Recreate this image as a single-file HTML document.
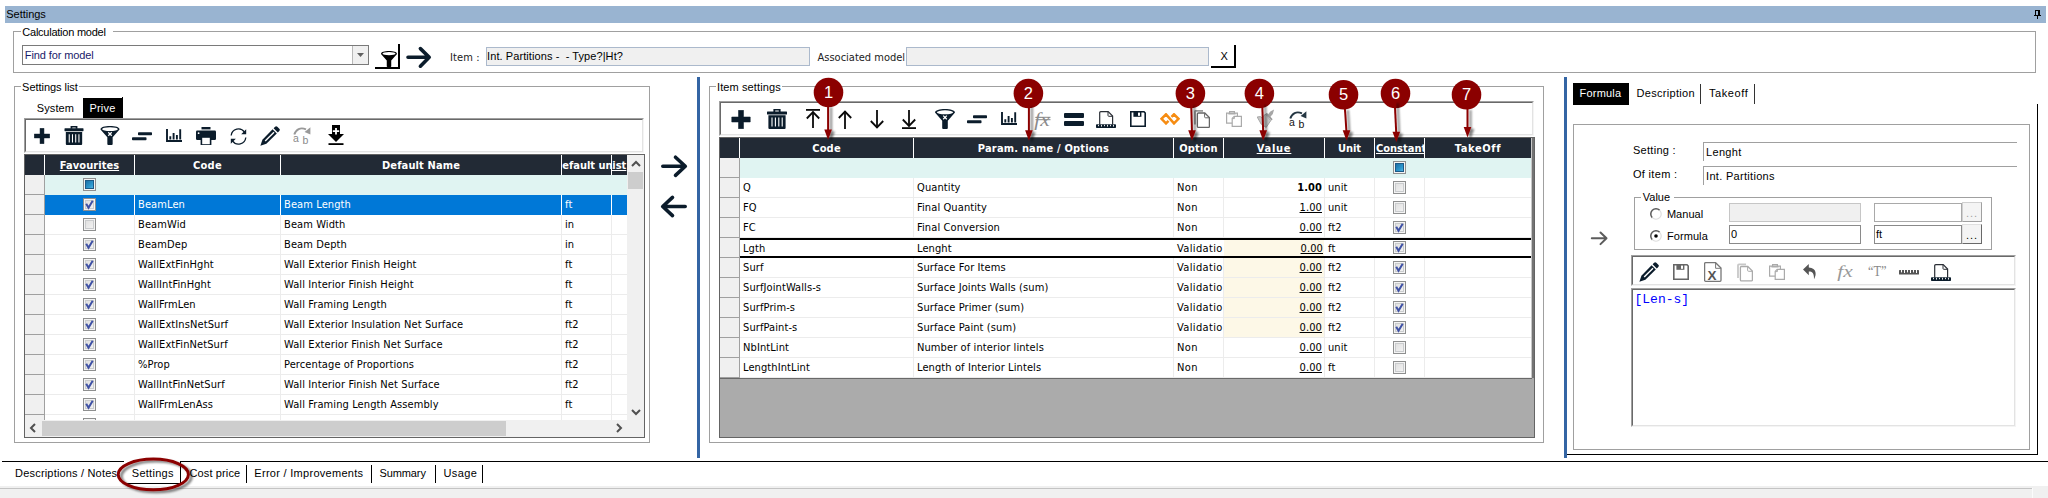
<!DOCTYPE html><html><head><meta charset="utf-8"><title>Settings</title><style>
html,body{margin:0;padding:0;background:#fff;}
body{width:2048px;height:498px;position:relative;overflow:hidden;font-family:"Liberation Sans",sans-serif;font-size:11px;color:#000;}
div,span,svg{position:absolute;box-sizing:border-box;}
span{white-space:pre;line-height:14px;}
.t{font-family:"Liberation Sans",sans-serif;font-size:11px;}
.g{font-family:"DejaVu Sans Condensed","Liberation Sans",sans-serif;font-size:11px;letter-spacing:0.1px;}
.h{font-family:"DejaVu Sans Condensed","Liberation Sans",sans-serif;font-size:11px;font-weight:bold;color:#fff;text-align:center;}
.u{text-decoration:underline;}
.cb{width:13px;height:13px;border:1px solid #8e8f8f;background:linear-gradient(135deg,#dcdcdc 0%,#f6f6f6 100%);box-shadow:inset 0 0 0 1px #f4f4f4, inset 0 0 0 2px #c9cbcd;}
</style></head><body>
<div style="left:5px;top:6px;width:2041px;height:17px;background:#99b4d1"></div>
<span class="t" style="left:6.3px;top:7px;letter-spacing:-0.03px;">Settings</span>
<svg style="left:2034px;top:10px;" width="8" height="10" viewBox="0 0 8 10"><path d="M1 0h5v5h1v1H4v3H3V6H0V5h1zM2 1v4h2V1z" fill="#000"/></svg>
<div style="left:0px;top:486px;width:2048px;height:12px;background:#f0f0f0"></div>
<div style="left:0px;top:488px;width:2032px;height:1px;background:#c4c4c4"></div>
<div style="left:2032px;top:488px;width:1px;height:10px;background:#fbfbfb"></div>
<div style="left:13px;top:31px;width:2023px;height:42px;border:1px solid #a0a0a0"></div>
<div style="left:20.8px;top:31px;width:92.4px;height:1px;background:#fff"></div>
<span class="t" style="left:22.3px;top:25px;letter-spacing:-0.24px;">Calculation model</span>
<div style="left:22px;top:45px;width:347px;height:20px;border:1px solid #7a7a7a;background:#fff"></div>
<span class="t" style="left:24.8px;top:48px;letter-spacing:-0.11px;color:#1a1a6a">Find for model</span>
<div style="left:352px;top:46px;width:16px;height:18px;border-left:1px solid #b8b8b8;background:#f0f0f0"></div>
<svg style="left:357px;top:53px;" width="7" height="4" viewBox="0 0 7 4"><path d="M0 0h7L3.5 4z" fill="#606060"/></svg>
<div style="left:398px;top:44px;width:2px;height:25px;background:#000"></div>
<div style="left:375px;top:67px;width:25px;height:2px;background:#000"></div>
<svg style="left:381px;top:51px;" width="16" height="16" viewBox="0 0 20 20"><path d="M0 3.6C0 1.2 4.5 0 10 0s10 1.2 10 3.6L12.8 11.8V19q0 1-1 1H8.2q-1 0-1-1V11.8z" fill="#000"/><ellipse cx="10" cy="3.3" rx="8.2" ry="2" fill="#fff"/></svg>
<svg style="left:405px;top:46px;" width="28" height="23" viewBox="0 0 28 23"><path d="M3 11.3h21M15.4 2.600L24.200 11.300l-8.800 8.900" fill="none" stroke="#0b1c2b" stroke-width="3.600" stroke-linecap="round" stroke-linejoin="round"/></svg>
<span class="g" style="left:449.9px;top:51px;letter-spacing:0.15px;color:#222">Item :</span>
<div style="left:486px;top:47px;width:324px;height:19px;border:1px solid #abb9cc;background:#f0f0f0"></div>
<span class="t" style="left:487.1px;top:49px;letter-spacing:0.08px;">Int. Partitions -  - Type?|Ht?</span>
<span class="g" style="left:817.5px;top:51px;letter-spacing:-0.00px;color:#222">Associated model</span>
<div style="left:906px;top:47px;width:303px;height:19px;border:1px solid #abb9cc;background:#f0f0f0"></div>
<div style="left:1234px;top:45px;width:2px;height:23px;background:#000"></div>
<div style="left:1211px;top:66px;width:25px;height:2px;background:#000"></div>
<span class="t" style="left:1220.5px;top:49px;letter-spacing:0.46px;">X</span>
<div style="left:14px;top:86px;width:636px;height:357px;border:1px solid #a0a0a0"></div>
<div style="left:20.6px;top:86px;width:58.699999999999996px;height:1px;background:#fff"></div>
<span class="t" style="left:22.1px;top:80px;letter-spacing:-0.04px;">Settings list</span>
<span class="t" style="left:36.7px;top:101px;letter-spacing:0.12px;">System</span>
<div style="left:83px;top:98px;width:40px;height:20px;background:#000"></div>
<div style="left:122px;top:97px;width:1px;height:1px;background:#000"></div>
<span class="t" style="left:89.4px;top:101px;letter-spacing:0.21px;color:#fff">Prive</span>
<div style="left:24px;top:118px;width:620px;height:35px;background:#fff;border-top:1px solid #a0a0a0;border-left:1px solid #a0a0a0;border-right:1px solid #f4f4f4;border-bottom:1px solid #f4f4f4"></div>
<div style="left:25px;top:119px;width:618px;height:33px;border-top:1px solid #696969;border-left:1px solid #696969;border-right:1px solid #e3e3e3;border-bottom:1px solid #e3e3e3"></div>
<div style="left:24px;top:154px;width:621px;height:284px;background:#fff;border:1px solid #646464"></div>
<svg style="left:34px;top:128px;" width="16" height="16" viewBox="0 0 20 20"><path d="M7.55 0.3h4.9v7.25h7.25v4.9h-7.25v7.25h-4.9v-7.25h-7.25v-4.9h7.25z" fill="#0b1c2b" stroke="#0b1c2b" stroke-width="0.6" stroke-linejoin="round"/></svg>
<svg style="left:64px;top:126px;" width="20" height="19" viewBox="0 0 20 20"><rect x="0" y="2.4" width="20" height="3" rx="0.5" fill="#0b1c2b"/><path d="M6.4 0h7.2v3h-1.8V1.5H8.2V3H6.4z" fill="#0b1c2b"/><path d="M1.4 6.2h17.2v12.8q0 1-1 1H2.4q-1 0-1-1z" fill="#0b1c2b"/><path d="M5 8.6v8.8M8.4 8.6v8.8M11.8 8.6v8.8M15.2 8.6v8.8" stroke="#fff" stroke-width="1.1"/></svg>
<svg style="left:100px;top:126px;" width="20" height="19" viewBox="0 0 20 20"><path d="M0 3.6C0 1.2 4.5 0 10 0s10 1.2 10 3.6L12.8 11.8V19q0 1-1 1H8.2q-1 0-1-1V11.8z" fill="#0b1c2b"/><ellipse cx="10" cy="3.3" rx="8.2" ry="2" fill="#fff"/><path d="M8.2 6.6l3.6 3.6M11.8 6.6l-3.6 3.6" stroke="#fff" stroke-width="1.3"/></svg>
<svg style="left:132px;top:132px;" width="20" height="9" viewBox="0 0 20 9"><rect x="6" y="0.2" width="14" height="3.1" rx="0.8" fill="#0b1c2b"/><rect x="0" y="5.2" width="14.5" height="3.1" rx="0.8" fill="#0b1c2b"/></svg>
<svg style="left:166px;top:129px;" width="16" height="13" viewBox="0 0 16 13"><path d="M1 0v12h15" fill="none" stroke="#0b1c2b" stroke-width="1.900"/><path d="M4.300 7.300v3.200M7.600 4v6.500M10.900 6v4.500M14.200 0.300v10.200" stroke="#0b1c2b" stroke-width="1.900"/></svg>
<svg style="left:196px;top:127px;" width="20" height="18" viewBox="0 0 20 18"><rect x="5.5" y="0" width="9" height="2.4" fill="#0b1c2b"/><rect x="0" y="3.6" width="20" height="9.4" rx="1.2" fill="#0b1c2b"/><rect x="5.4" y="10" width="9.2" height="8" fill="#fff" stroke="#0b1c2b" stroke-width="1.6"/><circle cx="2.6" cy="6.2" r="0.9" fill="#fff"/></svg>
<svg style="left:230px;top:128px;" width="17" height="17" viewBox="0 0 17 17"><path d="M1.2 7.5A7.3 7.3 0 0 1 14.5 4.2" fill="none" stroke="#0b1c2b" stroke-width="1.3"/><path d="M16.2 1.2v5h-5z" fill="#0b1c2b"/><path d="M15.8 9.5A7.3 7.3 0 0 1 2.5 12.8" fill="none" stroke="#0b1c2b" stroke-width="1.3"/><path d="M0.8 15.8v-5h5z" fill="#0b1c2b"/></svg>
<svg style="left:260px;top:126px;" width="20" height="20" viewBox="0 0 20 20"><path d="M12.6 3.2l4.2 4.2L6.4 17.8l-6 2 2-6z" fill="#0b1c2b"/><path d="M13.6 2.2l1.5-1.5q1.1-1.1 2.2 0l2 2q1.1 1.1 0 2.200l-1.5 1.5z" fill="#0b1c2b"/><path d="M5.2 15l8.8-8.800" stroke="#fff" stroke-width="1.4"/></svg>
<svg style="left:293px;top:126px;" width="18" height="18" viewBox="0 0 18 18"><path d="M1.300 8.600C2.800 3.400 7.500 0.800 13 3.400" fill="none" stroke="#999" stroke-width="1.900"/><path d="M17.400 1.300v7.300l-5.800-2.600z" fill="#999"/><text x="0.100" y="15.600" font-family="Liberation Sans,sans-serif" font-size="10.500" fill="#8a8a8a">a</text><text x="9.600" y="17.900" font-family="Liberation Sans,sans-serif" font-size="10.500" fill="#8a8a8a">b</text></svg>
<svg style="left:328px;top:125px;" width="16" height="20" viewBox="0 0 16 20"><path d="M4 0h8v9h4l-8 8-8-8h4z" fill="#000"/><path d="M7.1 3h1.8v2.3h2.3v1.8H8.9v2.3H7.1V7.1H4.8V5.3h2.3z" fill="#fff"/><rect x="0.5" y="18.2" width="15" height="1.8" fill="#000"/></svg>
<div style="left:25px;top:155px;width:602px;height:20px;background:#222a35"></div>
<div style="left:44px;top:155px;width:1px;height:20px;background:#fff"></div>
<div style="left:134px;top:155px;width:1px;height:20px;background:#fff"></div>
<div style="left:280px;top:155px;width:1px;height:20px;background:#fff"></div>
<div style="left:561px;top:155px;width:1px;height:20px;background:#fff"></div>
<div style="left:611px;top:155px;width:1px;height:20px;background:#fff"></div>
<span class="h u" style="left:45px;top:159px;width:89px;letter-spacing:0.06px;">Favourites</span>
<span class="h" style="left:135px;top:159px;width:145px;letter-spacing:0.28px;">Code</span>
<span class="h" style="left:281px;top:159px;width:280px;letter-spacing:0.12px;">Default Name</span>
<div style="left:562px;top:155px;width:49px;height:20px;overflow:hidden"><span class="h" style="left:-8px;top:4px;text-align:left">Default unit</span></div>
<div style="left:612px;top:155px;width:15px;height:20px;overflow:hidden"><span class="h u" style="left:-6px;top:4px;text-align:left">List</span></div>
<div style="left:45px;top:175px;width:582px;height:20px;background:#e0f4f2"></div>
<div style="left:25px;top:175px;width:19px;height:245px;background:#f0f0f0"></div>
<div style="left:44px;top:175px;width:1px;height:245px;background:#a0a0a0"></div>
<div class="cb" style="left:83px;top:178px;width:13px;height:13px;"><div style="left:1px;top:1px;width:9px;height:9px;border:1px solid #1d5a86;background:linear-gradient(135deg,#1b6fa6,#2f9bd0 70%,#55b5e0)"></div></div>
<div style="left:25px;top:194px;width:19px;height:1px;background:#a0a0a0"></div>
<div style="left:25px;top:195px;width:602px;height:225px;overflow:hidden">
<div style="left:20px;top:0px;width:583px;height:20px;background:#0078d7"></div>
<div style="left:0px;top:19px;width:19px;height:1px;background:#a0a0a0"></div>
<div class="cb" style="left:58px;top:3px;width:13px;height:13px;"><svg style="left:0px;top:0px" width="11" height="11" viewBox="0 0 11 11"><path d="M2.200 4.800l2.300 4L8.700 1.700" fill="none" stroke="#3f51a5" stroke-width="2"/></svg></div>
<span class="g" style="left:113px;top:3px;color:#fff">BeamLen</span>
<span class="g" style="left:259px;top:3px;color:#fff">Beam Length</span>
<span class="g" style="left:540px;top:3px;color:#fff">ft</span>
<div style="left:0px;top:39px;width:19px;height:1px;background:#a0a0a0"></div>
<div style="left:20px;top:39px;width:583px;height:1px;background:#ececec"></div>
<div class="cb" style="left:58px;top:23px;width:13px;height:13px;"></div>
<span class="g" style="left:113px;top:23px;">BeamWid</span>
<span class="g" style="left:259px;top:23px;">Beam Width</span>
<span class="g" style="left:540px;top:23px;">in</span>
<div style="left:0px;top:59px;width:19px;height:1px;background:#a0a0a0"></div>
<div style="left:20px;top:59px;width:583px;height:1px;background:#ececec"></div>
<div class="cb" style="left:58px;top:43px;width:13px;height:13px;"><svg style="left:0px;top:0px" width="11" height="11" viewBox="0 0 11 11"><path d="M2.200 4.800l2.300 4L8.700 1.700" fill="none" stroke="#3f51a5" stroke-width="2"/></svg></div>
<span class="g" style="left:113px;top:43px;">BeamDep</span>
<span class="g" style="left:259px;top:43px;">Beam Depth</span>
<span class="g" style="left:540px;top:43px;">in</span>
<div style="left:0px;top:79px;width:19px;height:1px;background:#a0a0a0"></div>
<div style="left:20px;top:79px;width:583px;height:1px;background:#ececec"></div>
<div class="cb" style="left:58px;top:63px;width:13px;height:13px;"><svg style="left:0px;top:0px" width="11" height="11" viewBox="0 0 11 11"><path d="M2.200 4.800l2.300 4L8.700 1.700" fill="none" stroke="#3f51a5" stroke-width="2"/></svg></div>
<span class="g" style="left:113px;top:63px;">WallExtFinHght</span>
<span class="g" style="left:259px;top:63px;">Wall Exterior Finish Height</span>
<span class="g" style="left:540px;top:63px;">ft</span>
<div style="left:0px;top:99px;width:19px;height:1px;background:#a0a0a0"></div>
<div style="left:20px;top:99px;width:583px;height:1px;background:#ececec"></div>
<div class="cb" style="left:58px;top:83px;width:13px;height:13px;"><svg style="left:0px;top:0px" width="11" height="11" viewBox="0 0 11 11"><path d="M2.200 4.800l2.300 4L8.700 1.700" fill="none" stroke="#3f51a5" stroke-width="2"/></svg></div>
<span class="g" style="left:113px;top:83px;">WallIntFinHght</span>
<span class="g" style="left:259px;top:83px;">Wall Interior Finish Height</span>
<span class="g" style="left:540px;top:83px;">ft</span>
<div style="left:0px;top:119px;width:19px;height:1px;background:#a0a0a0"></div>
<div style="left:20px;top:119px;width:583px;height:1px;background:#ececec"></div>
<div class="cb" style="left:58px;top:103px;width:13px;height:13px;"><svg style="left:0px;top:0px" width="11" height="11" viewBox="0 0 11 11"><path d="M2.200 4.800l2.300 4L8.700 1.700" fill="none" stroke="#3f51a5" stroke-width="2"/></svg></div>
<span class="g" style="left:113px;top:103px;">WallFrmLen</span>
<span class="g" style="left:259px;top:103px;">Wall Framing Length</span>
<span class="g" style="left:540px;top:103px;">ft</span>
<div style="left:0px;top:139px;width:19px;height:1px;background:#a0a0a0"></div>
<div style="left:20px;top:139px;width:583px;height:1px;background:#ececec"></div>
<div class="cb" style="left:58px;top:123px;width:13px;height:13px;"><svg style="left:0px;top:0px" width="11" height="11" viewBox="0 0 11 11"><path d="M2.200 4.800l2.300 4L8.700 1.700" fill="none" stroke="#3f51a5" stroke-width="2"/></svg></div>
<span class="g" style="left:113px;top:123px;">WallExtInsNetSurf</span>
<span class="g" style="left:259px;top:123px;">Wall Exterior Insulation Net Surface</span>
<span class="g" style="left:540px;top:123px;">ft2</span>
<div style="left:0px;top:159px;width:19px;height:1px;background:#a0a0a0"></div>
<div style="left:20px;top:159px;width:583px;height:1px;background:#ececec"></div>
<div class="cb" style="left:58px;top:143px;width:13px;height:13px;"><svg style="left:0px;top:0px" width="11" height="11" viewBox="0 0 11 11"><path d="M2.200 4.800l2.300 4L8.700 1.700" fill="none" stroke="#3f51a5" stroke-width="2"/></svg></div>
<span class="g" style="left:113px;top:143px;">WallExtFinNetSurf</span>
<span class="g" style="left:259px;top:143px;">Wall Exterior Finish Net Surface</span>
<span class="g" style="left:540px;top:143px;">ft2</span>
<div style="left:0px;top:179px;width:19px;height:1px;background:#a0a0a0"></div>
<div style="left:20px;top:179px;width:583px;height:1px;background:#ececec"></div>
<div class="cb" style="left:58px;top:163px;width:13px;height:13px;"><svg style="left:0px;top:0px" width="11" height="11" viewBox="0 0 11 11"><path d="M2.200 4.800l2.300 4L8.700 1.700" fill="none" stroke="#3f51a5" stroke-width="2"/></svg></div>
<span class="g" style="left:113px;top:163px;">%Prop</span>
<span class="g" style="left:259px;top:163px;">Percentage of Proportions</span>
<span class="g" style="left:540px;top:163px;">ft2</span>
<div style="left:0px;top:199px;width:19px;height:1px;background:#a0a0a0"></div>
<div style="left:20px;top:199px;width:583px;height:1px;background:#ececec"></div>
<div class="cb" style="left:58px;top:183px;width:13px;height:13px;"><svg style="left:0px;top:0px" width="11" height="11" viewBox="0 0 11 11"><path d="M2.200 4.800l2.300 4L8.700 1.700" fill="none" stroke="#3f51a5" stroke-width="2"/></svg></div>
<span class="g" style="left:113px;top:183px;">WallIntFinNetSurf</span>
<span class="g" style="left:259px;top:183px;">Wall Interior Finish Net Surface</span>
<span class="g" style="left:540px;top:183px;">ft2</span>
<div style="left:0px;top:219px;width:19px;height:1px;background:#a0a0a0"></div>
<div style="left:20px;top:219px;width:583px;height:1px;background:#ececec"></div>
<div class="cb" style="left:58px;top:203px;width:13px;height:13px;"><svg style="left:0px;top:0px" width="11" height="11" viewBox="0 0 11 11"><path d="M2.200 4.800l2.300 4L8.700 1.700" fill="none" stroke="#3f51a5" stroke-width="2"/></svg></div>
<span class="g" style="left:113px;top:203px;">WallFrmLenAss</span>
<span class="g" style="left:259px;top:203px;">Wall Framing Length Assembly</span>
<span class="g" style="left:540px;top:203px;">ft</span>
<div style="left:0px;top:239px;width:19px;height:1px;background:#a0a0a0"></div>
<div style="left:20px;top:239px;width:583px;height:1px;background:#ececec"></div>
<div class="cb" style="left:58px;top:223px;width:13px;height:13px;"><svg style="left:0px;top:0px" width="11" height="11" viewBox="0 0 11 11"><path d="M2.200 4.800l2.300 4L8.700 1.700" fill="none" stroke="#3f51a5" stroke-width="2"/></svg></div>
<span class="g" style="left:113px;top:223px;">WallExtSidNetSurf</span>
<span class="g" style="left:259px;top:223px;">Wall Exterior Siding Net Surface</span>
<span class="g" style="left:540px;top:223px;">ft2</span>
<div style="left:109px;top:0px;width:1px;height:225px;background:#ececec"></div>
<div style="left:109px;top:0px;width:1px;height:20px;background:#fff"></div>
<div style="left:255px;top:0px;width:1px;height:225px;background:#ececec"></div>
<div style="left:255px;top:0px;width:1px;height:20px;background:#fff"></div>
<div style="left:536px;top:0px;width:1px;height:225px;background:#ececec"></div>
<div style="left:536px;top:0px;width:1px;height:20px;background:#fff"></div>
<div style="left:586px;top:0px;width:1px;height:225px;background:#ececec"></div>
<div style="left:586px;top:0px;width:1px;height:20px;background:#fff"></div>
</div>
<div style="left:627px;top:155px;width:17px;height:265px;background:#f0f0f0"></div>
<div style="left:628px;top:172px;width:15px;height:17px;background:#cdcdcd"></div>
<svg style="left:631px;top:160px;" width="10" height="7" viewBox="0 0 10 7"><path d="M1 6L5 2l4 4" fill="none" stroke="#505050" stroke-width="2"/></svg>
<svg style="left:631px;top:409px;" width="10" height="7" viewBox="0 0 10 7"><path d="M1 1L5 5l4-4" fill="none" stroke="#505050" stroke-width="2"/></svg>
<div style="left:25px;top:420px;width:619px;height:17px;background:#f0f0f0"></div>
<div style="left:42px;top:421px;width:464px;height:15px;background:#cdcdcd"></div>
<svg style="left:29px;top:423px;" width="7" height="10" viewBox="0 0 7 10"><path d="M6 1L2 5l4 4" fill="none" stroke="#505050" stroke-width="2"/></svg>
<svg style="left:616px;top:423px;" width="7" height="10" viewBox="0 0 7 10"><path d="M1 1L5 5l-4 4" fill="none" stroke="#505050" stroke-width="2"/></svg>
<svg style="left:660px;top:154px;" width="30" height="25" viewBox="0 0 30 25"><path d="M2.800 12.300h22M15.500 3.200L25.300 12.300l-9.800 9.100" fill="none" stroke="#0b1c2b" stroke-width="3.600" stroke-linecap="round" stroke-linejoin="round"/></svg>
<svg style="left:660px;top:194px;" width="30" height="25" viewBox="0 0 30 25"><path d="M25.200 12.500h-22M12.500 3.400L2.700 12.500l9.800 9.100" fill="none" stroke="#0b1c2b" stroke-width="3.600" stroke-linecap="round" stroke-linejoin="round"/></svg>
<div style="left:697px;top:77px;width:3px;height:381px;background:#3465a4"></div>
<div style="left:1564px;top:77px;width:3px;height:381px;background:#3465a4"></div>
<div style="left:709px;top:86px;width:835px;height:357px;border:1px solid #a0a0a0"></div>
<div style="left:715.5px;top:86px;width:66.79999999999995px;height:1px;background:#fff"></div>
<span class="t" style="left:717.0px;top:80px;letter-spacing:0.11px;">Item settings</span>
<div style="left:719px;top:101px;width:815px;height:35px;background:#fff;border-top:1px solid #a0a0a0;border-left:1px solid #a0a0a0;border-right:1px solid #f4f4f4;border-bottom:1px solid #f4f4f4"></div>
<div style="left:720px;top:102px;width:813px;height:33px;border-top:1px solid #696969;border-left:1px solid #696969;border-right:1px solid #e3e3e3;border-bottom:1px solid #e3e3e3"></div>
<div style="left:719px;top:137px;width:816px;height:301px;background:#ababab;border:1px solid #646464"></div>
<svg style="left:731px;top:110px;" width="20" height="19" viewBox="0 0 20 20"><path d="M7.4 0.3h5.2v7.1000000000000005h7.1000000000000005v5.2h-7.1000000000000005v7.1000000000000005h-5.2v-7.1000000000000005h-7.1000000000000005v-5.2h7.1000000000000005z" fill="#0b1c2b" stroke="#0b1c2b" stroke-width="0.6" stroke-linejoin="round"/></svg>
<svg style="left:767px;top:109px;" width="20" height="20" viewBox="0 0 20 20"><rect x="0" y="2.4" width="20" height="3" rx="0.5" fill="#0b1c2b"/><path d="M6.4 0h7.2v3h-1.8V1.5H8.2V3H6.4z" fill="#0b1c2b"/><path d="M1.4 6.2h17.2v12.8q0 1-1 1H2.4q-1 0-1-1z" fill="#0b1c2b"/><path d="M5 8.6v8.8M8.4 8.6v8.8M11.8 8.6v8.8M15.2 8.6v8.8" stroke="#fff" stroke-width="1.1"/></svg>
<svg style="left:806px;top:109px;" width="14" height="19" viewBox="0 0 14 19"><path d="M0 0.9h14" stroke="#0a0a0a" stroke-width="1.8"/><path d="M7 2.8V19" stroke="#0a0a0a" stroke-width="1.8" fill="none"/><path d="M0.8 9.5L7 3.1l6.2 6.4" stroke="#0a0a0a" stroke-width="1.8" fill="none"/></svg>
<svg style="left:838px;top:110px;" width="14" height="19" viewBox="0 0 14 19"><path d="M7 1.3V19" stroke="#0a0a0a" stroke-width="1.8" fill="none"/><path d="M0.8 8L7 1.6l6.2 6.4" stroke="#0a0a0a" stroke-width="1.8" fill="none"/></svg>
<svg style="left:870px;top:110px;" width="14" height="19" viewBox="0 0 14 19"><g transform="translate(0,19) scale(1,-1)"><path d="M7 1.3V19" stroke="#0a0a0a" stroke-width="1.8" fill="none"/><path d="M0.8 8L7 1.6l6.2 6.4" stroke="#0a0a0a" stroke-width="1.8" fill="none"/></g></svg>
<svg style="left:902px;top:110px;" width="14" height="19" viewBox="0 0 14 19"><g transform="translate(0,19) scale(1,-1)"><path d="M0 0.9h14" stroke="#0a0a0a" stroke-width="1.8"/><path d="M7 2.8V19" stroke="#0a0a0a" stroke-width="1.8" fill="none"/><path d="M0.8 9.5L7 3.1l6.2 6.4" stroke="#0a0a0a" stroke-width="1.8" fill="none"/></g></svg>
<svg style="left:935px;top:109px;" width="20" height="20" viewBox="0 0 20 20"><path d="M0 3.6C0 1.2 4.5 0 10 0s10 1.2 10 3.6L12.8 11.8V19q0 1-1 1H8.2q-1 0-1-1V11.8z" fill="#0b1c2b"/><ellipse cx="10" cy="3.3" rx="8.2" ry="2" fill="#fff"/><path d="M8.2 6.6l3.6 3.6M11.8 6.6l-3.6 3.6" stroke="#fff" stroke-width="1.3"/></svg>
<svg style="left:967px;top:115px;" width="20" height="9" viewBox="0 0 20 9"><rect x="6" y="0.2" width="14" height="3.1" rx="0.8" fill="#0b1c2b"/><rect x="0" y="5.2" width="14.5" height="3.1" rx="0.8" fill="#0b1c2b"/></svg>
<svg style="left:1001px;top:112px;" width="16" height="13" viewBox="0 0 16 13"><path d="M1 0v12h15" fill="none" stroke="#0b1c2b" stroke-width="1.900"/><path d="M4.300 7.300v3.200M7.600 4v6.500M10.900 6v4.500M14.200 0.300v10.200" stroke="#0b1c2b" stroke-width="1.900"/></svg>
<svg style="left:1034px;top:111px;overflow:visible" width="17" height="17" viewBox="0 0 17 17"><text x="0.300" y="14.6" font-family="Liberation Serif,serif" font-style="italic" font-size="18.5" fill="#8a8a8a" textLength="15.500" lengthAdjust="spacingAndGlyphs">fx</text><path d="M1.500 6.300h15M1.500 8.700h15" stroke="#8a8a8a" stroke-width="1"/></svg>
<svg style="left:1064px;top:113px;" width="20" height="13" viewBox="0 0 20 13"><rect x="0" y="0" width="20" height="5" rx="1" fill="#0b1c2b"/><rect x="0" y="8" width="20" height="5" rx="1" fill="#0b1c2b"/></svg>
<svg style="left:1096px;top:111px;" width="20" height="17" viewBox="0 0 20 17"><path d="M3.700 13.500V1.700q0-1 1-1h7.500l4.400 4.400v8.400" fill="none" stroke="#2b2f36" stroke-width="1.200"/><path d="M12 0.900v3.600q0 0.800 0.800 0.800h3.600" fill="none" stroke="#2b2f36" stroke-width="1"/><rect x="0" y="13.200" width="20" height="3.800" rx="0.800" fill="#0b1c2b"/><path d="M2.500 13.800v1.400M5.500 13.800v1.800M8.500 13.800v1.400M11.500 13.800v1.800M14.500 13.800v1.400M17.500 13.800v1.800" stroke="#fff" stroke-width="0.900"/></svg>
<svg style="left:1130px;top:111px;" width="16" height="16" viewBox="0 0 16 16"><path d="M0.8 0.8h13.2l1.2 1.2v13.2H0.8z" fill="#fff" stroke="#0b1c2b" stroke-width="1.6"/><rect x="3.4" y="0.8" width="8" height="5" fill="#0b1c2b"/><rect x="8" y="1.6" width="2" height="3.2" fill="#fff"/></svg>
<svg style="left:1160px;top:113px;" width="20" height="12" viewBox="0 0 20 12"><path d="M8.500 7.900L6 10.400 1.500 5.800 6 1.300l8 9.100 4.500-4.600L14 1.300l-2.500 2.500" fill="none" stroke="#f68c12" stroke-width="2.500"/></svg>
<svg style="left:1194px;top:110px;" width="16" height="18" viewBox="0 0 16 18"><path d="M1 14.500V1.800q0-1 1-1h7" fill="none" stroke="#666" stroke-width="1.800" opacity=".65"/><path d="M4.400 3h6.400l4.600 4.600v8.800q0 1-1 1H4.400q-1 0-1-1V4q0-1 1-1z" fill="#fff" stroke="#666" stroke-width="1.300"/><path d="M10.600 3.200v3.600q0 1 1 1h3.600" fill="none" stroke="#666" stroke-width="1"/></svg>
<svg style="left:1226px;top:111px;" width="16" height="16" viewBox="0 0 16 16"><path d="M0.6 2.2h10.8v10H0.6z" fill="#fff" stroke="#aaa" stroke-width="1.2"/><path d="M3.6 2.2V0.6h4.8v1.6" fill="none" stroke="#aaa" stroke-width="1.2"/><path d="M2.4 2.8h7.2" stroke="#aaa" stroke-width="1.4"/><path d="M6.2 7.4l2-2h7.2v10H6.2z" fill="#fff" stroke="#aaa" stroke-width="1.2"/><path d="M8.4 5.6v2h-2" fill="none" stroke="#aaa" stroke-width="1"/></svg>
<svg style="left:1257px;top:109px;" width="18" height="19" viewBox="0 0 18 19"><path d="M17.100 0.500L15.800 5.100 12.500 8.800 10 6.800 13.300 2.600z" fill="#a6a6a6"/><path d="M8.400 5.100L13.700 11.700 9.200 18.400 4.200 15.100 0.200 8 3.400 7.600 5 8.800z" fill="#c6c6c6" stroke="#a6a6a6" stroke-width="1"/><path d="M9.200 4.300L15 10.900" stroke="#9c9c9c" stroke-width="1.800"/></svg>
<svg style="left:1289px;top:110px;" width="18" height="18" viewBox="0 0 18 18"><path d="M1.300 8.600C2.800 3.400 7.500 0.800 13 3.400" fill="none" stroke="#243642" stroke-width="1.900"/><path d="M17.400 1.300v7.300l-5.800-2.600z" fill="#243642"/><text x="0.100" y="15.600" font-family="Liberation Sans,sans-serif" font-size="10.500" fill="#111">a</text><text x="9.600" y="17.900" font-family="Liberation Sans,sans-serif" font-size="10.500" fill="#111">b</text></svg>
<div style="left:720px;top:138px;width:811px;height:20px;background:#222a35"></div>
<div style="left:739px;top:138px;width:1px;height:20px;background:#fff"></div>
<div style="left:913px;top:138px;width:1px;height:20px;background:#fff"></div>
<div style="left:1173px;top:138px;width:1px;height:20px;background:#fff"></div>
<div style="left:1223px;top:138px;width:1px;height:20px;background:#fff"></div>
<div style="left:1324px;top:138px;width:1px;height:20px;background:#fff"></div>
<div style="left:1374px;top:138px;width:1px;height:20px;background:#fff"></div>
<div style="left:1424px;top:138px;width:1px;height:20px;background:#fff"></div>
<div style="left:1531px;top:138px;width:1px;height:240px;background:#c8c8c8"></div>
<div style="left:1532px;top:138px;width:2px;height:240px;background:#747474"></div>
<span class="h" style="left:740px;top:142px;width:173px;letter-spacing:0.18px;">Code</span>
<span class="h" style="left:914px;top:142px;width:259px;letter-spacing:0.19px;">Param. name / Options</span>
<span class="h" style="left:1174px;top:142px;width:49px;letter-spacing:0.21px;">Option</span>
<span class="h u" style="left:1224px;top:142px;width:100px;letter-spacing:0.76px;">Value</span>
<span class="h" style="left:1325px;top:142px;width:49px;letter-spacing:-0.03px;">Unit</span>
<div style="left:1375px;top:138px;width:49px;height:20px;overflow:hidden"><span class="h u" style="left:1px;top:4px;text-align:left">Constant</span></div>
<span class="h" style="left:1425px;top:142px;width:106px;letter-spacing:0.61px;">TakeOff</span>
<div style="left:740px;top:158px;width:791px;height:20px;background:#e0f4f2"></div>
<div style="left:720px;top:158px;width:19px;height:220px;background:#f0f0f0"></div>
<div style="left:739px;top:158px;width:1px;height:220px;background:#a0a0a0"></div>
<div style="left:720px;top:177px;width:19px;height:1px;background:#a0a0a0"></div>
<div class="cb" style="left:1393px;top:161px;width:13px;height:13px;"><div style="left:1px;top:1px;width:9px;height:9px;border:1px solid #1d5a86;background:linear-gradient(135deg,#1b6fa6,#2f9bd0 70%,#55b5e0)"></div></div>
<div style="left:740px;top:178px;width:791px;height:200px;background:#fff"></div>
<div style="left:720px;top:197px;width:19px;height:1px;background:#a0a0a0"></div>
<div style="left:740px;top:197px;width:791px;height:1px;background:#ececec"></div>
<span class="g" style="left:743px;top:181px;">Q</span>
<span class="g" style="left:917px;top:181px;">Quantity</span>
<span class="g" style="left:1177px;top:181px;letter-spacing:0.35px">Non</span>
<span class="g" style="left:1224px;top:181px;width:98px;text-align:right;font-weight:bold;">1.00</span>
<span class="g" style="left:1328px;top:181px;">unit</span>
<div class="cb" style="left:1393px;top:181px;width:13px;height:13px;"></div>
<div style="left:720px;top:217px;width:19px;height:1px;background:#a0a0a0"></div>
<div style="left:740px;top:217px;width:791px;height:1px;background:#ececec"></div>
<span class="g" style="left:743px;top:201px;">FQ</span>
<span class="g" style="left:917px;top:201px;">Final Quantity</span>
<span class="g" style="left:1177px;top:201px;letter-spacing:0.35px">Non</span>
<span class="g" style="left:1224px;top:201px;width:98px;text-align:right;text-decoration:underline;">1.00</span>
<span class="g" style="left:1328px;top:201px;">unit</span>
<div class="cb" style="left:1393px;top:201px;width:13px;height:13px;"></div>
<div style="left:720px;top:237px;width:19px;height:1px;background:#a0a0a0"></div>
<div style="left:740px;top:237px;width:791px;height:1px;background:#ececec"></div>
<span class="g" style="left:743px;top:221px;">FC</span>
<span class="g" style="left:917px;top:221px;">Final Conversion</span>
<span class="g" style="left:1177px;top:221px;letter-spacing:0.35px">Non</span>
<span class="g" style="left:1224px;top:221px;width:98px;text-align:right;text-decoration:underline;">0.00</span>
<span class="g" style="left:1328px;top:221px;">ft2</span>
<div class="cb" style="left:1393px;top:221px;width:13px;height:13px;"><svg style="left:0px;top:0px" width="11" height="11" viewBox="0 0 11 11"><path d="M2.200 4.800l2.300 4L8.700 1.700" fill="none" stroke="#3f51a5" stroke-width="2"/></svg></div>
<div style="left:720px;top:257px;width:19px;height:1px;background:#a0a0a0"></div>
<div style="left:740px;top:257px;width:791px;height:1px;background:#ececec"></div>
<div style="left:1224px;top:238px;width:100px;height:19px;background:#fdf8e7"></div>
<span class="g" style="left:743px;top:242px;">Lgth</span>
<span class="g" style="left:917px;top:242px;">Lenght</span>
<span class="g" style="left:1177px;top:242px;letter-spacing:0.35px">Validatio</span>
<span class="g" style="left:1224px;top:242px;width:99px;text-align:right;text-decoration:underline;">0.00</span>
<span class="g" style="left:1328px;top:242px;">ft</span>
<div class="cb" style="left:1393px;top:241px;width:13px;height:13px;"><svg style="left:0px;top:0px" width="11" height="11" viewBox="0 0 11 11"><path d="M2.200 4.800l2.300 4L8.700 1.700" fill="none" stroke="#3f51a5" stroke-width="2"/></svg></div>
<div style="left:720px;top:277px;width:19px;height:1px;background:#a0a0a0"></div>
<div style="left:740px;top:277px;width:791px;height:1px;background:#ececec"></div>
<div style="left:1224px;top:258px;width:100px;height:19px;background:#fdf8e7"></div>
<span class="g" style="left:743px;top:261px;">Surf</span>
<span class="g" style="left:917px;top:261px;">Surface For Items</span>
<span class="g" style="left:1177px;top:261px;letter-spacing:0.35px">Validatio</span>
<span class="g" style="left:1224px;top:261px;width:98px;text-align:right;text-decoration:underline;">0.00</span>
<span class="g" style="left:1328px;top:261px;">ft2</span>
<div class="cb" style="left:1393px;top:261px;width:13px;height:13px;"><svg style="left:0px;top:0px" width="11" height="11" viewBox="0 0 11 11"><path d="M2.200 4.800l2.300 4L8.700 1.700" fill="none" stroke="#3f51a5" stroke-width="2"/></svg></div>
<div style="left:720px;top:297px;width:19px;height:1px;background:#a0a0a0"></div>
<div style="left:740px;top:297px;width:791px;height:1px;background:#ececec"></div>
<div style="left:1224px;top:278px;width:100px;height:19px;background:#fdf8e7"></div>
<span class="g" style="left:743px;top:281px;">SurfJointWalls-s</span>
<span class="g" style="left:917px;top:281px;">Surface Joints Walls (sum)</span>
<span class="g" style="left:1177px;top:281px;letter-spacing:0.35px">Validatio</span>
<span class="g" style="left:1224px;top:281px;width:98px;text-align:right;text-decoration:underline;">0.00</span>
<span class="g" style="left:1328px;top:281px;">ft2</span>
<div class="cb" style="left:1393px;top:281px;width:13px;height:13px;"><svg style="left:0px;top:0px" width="11" height="11" viewBox="0 0 11 11"><path d="M2.200 4.800l2.300 4L8.700 1.700" fill="none" stroke="#3f51a5" stroke-width="2"/></svg></div>
<div style="left:720px;top:317px;width:19px;height:1px;background:#a0a0a0"></div>
<div style="left:740px;top:317px;width:791px;height:1px;background:#ececec"></div>
<div style="left:1224px;top:298px;width:100px;height:19px;background:#fdf8e7"></div>
<span class="g" style="left:743px;top:301px;">SurfPrim-s</span>
<span class="g" style="left:917px;top:301px;">Surface Primer (sum)</span>
<span class="g" style="left:1177px;top:301px;letter-spacing:0.35px">Validatio</span>
<span class="g" style="left:1224px;top:301px;width:98px;text-align:right;text-decoration:underline;">0.00</span>
<span class="g" style="left:1328px;top:301px;">ft2</span>
<div class="cb" style="left:1393px;top:301px;width:13px;height:13px;"><svg style="left:0px;top:0px" width="11" height="11" viewBox="0 0 11 11"><path d="M2.200 4.800l2.300 4L8.700 1.700" fill="none" stroke="#3f51a5" stroke-width="2"/></svg></div>
<div style="left:720px;top:337px;width:19px;height:1px;background:#a0a0a0"></div>
<div style="left:740px;top:337px;width:791px;height:1px;background:#ececec"></div>
<div style="left:1224px;top:318px;width:100px;height:19px;background:#fdf8e7"></div>
<span class="g" style="left:743px;top:321px;">SurfPaint-s</span>
<span class="g" style="left:917px;top:321px;">Surface Paint (sum)</span>
<span class="g" style="left:1177px;top:321px;letter-spacing:0.35px">Validatio</span>
<span class="g" style="left:1224px;top:321px;width:98px;text-align:right;text-decoration:underline;">0.00</span>
<span class="g" style="left:1328px;top:321px;">ft2</span>
<div class="cb" style="left:1393px;top:321px;width:13px;height:13px;"><svg style="left:0px;top:0px" width="11" height="11" viewBox="0 0 11 11"><path d="M2.200 4.800l2.300 4L8.700 1.700" fill="none" stroke="#3f51a5" stroke-width="2"/></svg></div>
<div style="left:720px;top:357px;width:19px;height:1px;background:#a0a0a0"></div>
<div style="left:740px;top:357px;width:791px;height:1px;background:#ececec"></div>
<span class="g" style="left:743px;top:341px;">NbIntLint</span>
<span class="g" style="left:917px;top:341px;">Number of interior lintels</span>
<span class="g" style="left:1177px;top:341px;letter-spacing:0.35px">Non</span>
<span class="g" style="left:1224px;top:341px;width:98px;text-align:right;text-decoration:underline;">0.00</span>
<span class="g" style="left:1328px;top:341px;">unit</span>
<div class="cb" style="left:1393px;top:341px;width:13px;height:13px;"></div>
<div style="left:720px;top:377px;width:19px;height:1px;background:#a0a0a0"></div>
<div style="left:740px;top:377px;width:791px;height:1px;background:#ececec"></div>
<span class="g" style="left:743px;top:361px;">LengthIntLint</span>
<span class="g" style="left:917px;top:361px;">Length of Interior Lintels</span>
<span class="g" style="left:1177px;top:361px;letter-spacing:0.35px">Non</span>
<span class="g" style="left:1224px;top:361px;width:98px;text-align:right;text-decoration:underline;">0.00</span>
<span class="g" style="left:1328px;top:361px;">ft</span>
<div class="cb" style="left:1393px;top:361px;width:13px;height:13px;"></div>
<div style="left:913px;top:178px;width:1px;height:200px;background:#ececec"></div>
<div style="left:913px;top:240px;width:1px;height:16px;background:#fff"></div>
<div style="left:1173px;top:178px;width:1px;height:200px;background:#ececec"></div>
<div style="left:1173px;top:240px;width:1px;height:16px;background:#fff"></div>
<div style="left:1223px;top:178px;width:1px;height:200px;background:#ececec"></div>
<div style="left:1223px;top:240px;width:1px;height:16px;background:#fff"></div>
<div style="left:1324px;top:178px;width:1px;height:200px;background:#ececec"></div>
<div style="left:1324px;top:240px;width:1px;height:16px;background:#fff"></div>
<div style="left:1374px;top:178px;width:1px;height:200px;background:#ececec"></div>
<div style="left:1374px;top:240px;width:1px;height:16px;background:#fff"></div>
<div style="left:1424px;top:178px;width:1px;height:200px;background:#ececec"></div>
<div style="left:1424px;top:240px;width:1px;height:16px;background:#fff"></div>
<div style="left:740px;top:238px;width:791px;height:2px;background:#000"></div>
<div style="left:740px;top:256px;width:791px;height:2px;background:#000"></div>
<div style="left:720px;top:378px;width:812px;height:1px;background:#696969"></div>
<div style="left:1573px;top:83px;width:56px;height:22px;background:#000"></div>
<span class="t" style="left:1579.5px;top:86px;letter-spacing:0.21px;color:#fff">Formula</span>
<span class="t" style="left:1636.5px;top:86px;letter-spacing:0.31px;">Description</span>
<div style="left:1700px;top:84px;width:1px;height:20px;background:#333"></div>
<span class="t" style="left:1708.9px;top:86px;letter-spacing:0.59px;">Takeoff</span>
<div style="left:1754px;top:84px;width:1px;height:20px;background:#333"></div>
<div style="left:2037px;top:104px;width:1px;height:351px;background:#000"></div>
<div style="left:1567px;top:454px;width:471px;height:1px;background:#000"></div>
<div style="left:1573px;top:124px;width:457px;height:326px;border:1px solid #a0a0a0"></div>
<span class="t" style="left:1632.9px;top:143px;letter-spacing:0.30px;">Setting :</span>
<div style="left:1703px;top:142px;width:314px;height:19px;border-top:1px solid #a0a0a0;border-left:1px solid #a0a0a0"></div>
<span class="t" style="left:1706.1px;top:145px;letter-spacing:0.29px;">Lenght</span>
<span class="t" style="left:1632.9px;top:167px;letter-spacing:0.34px;">Of item :</span>
<div style="left:1703px;top:166px;width:314px;height:19px;border-top:1px solid #a0a0a0;border-left:1px solid #a0a0a0"></div>
<span class="t" style="left:1706.1px;top:169px;letter-spacing:0.30px;">Int. Partitions</span>
<div style="left:1634px;top:197px;width:358px;height:53px;border:1px solid #a0a0a0"></div>
<div style="left:1641px;top:197px;width:33px;height:1px;background:#fff"></div>
<span class="t" style="left:1642.8px;top:190px;letter-spacing:-0.03px;">Value</span>
<svg style="left:1649.5px;top:208px;" width="12" height="12" viewBox="0 0 12 12"><circle cx="6" cy="6" r="5" fill="#fff"/><path d="M2.300 9.700A5.200 5.200 0 0 1 9.700 2.300" fill="none" stroke="#5a5a5a" stroke-width="1.500"/><path d="M2.300 9.700A5.200 5.200 0 0 0 9.700 2.300" fill="none" stroke="#dedede" stroke-width="1.200"/></svg>
<span class="t" style="left:1666.9px;top:207px;letter-spacing:0.04px;">Manual</span>
<div style="left:1729px;top:203px;width:132px;height:19px;border:1px solid #c6c6c6;background:#f0f0f0"></div>
<div style="left:1874px;top:203px;width:88px;height:19px;border:1px solid #a9a9a9;background:#fff"></div>
<div style="left:1962px;top:202px;width:20px;height:20px;border:1px solid #d0d0d0;background:#f4f4f4;border-right-color:#a0a0a0;border-bottom-color:#a0a0a0"></div>
<span class="t" style="left:1966px;top:206px;color:#a0a0a0;letter-spacing:1px">...</span>
<svg style="left:1649.5px;top:230.2px;" width="12" height="12" viewBox="0 0 12 12"><circle cx="6" cy="6" r="5" fill="#fff"/><path d="M2.300 9.700A5.200 5.200 0 0 1 9.700 2.300" fill="none" stroke="#5a5a5a" stroke-width="1.500"/><path d="M2.300 9.700A5.200 5.200 0 0 0 9.700 2.300" fill="none" stroke="#dedede" stroke-width="1.200"/><circle cx="6" cy="6" r="1.800" fill="#000"/></svg>
<span class="t" style="left:1666.9px;top:229px;letter-spacing:0.09px;">Formula</span>
<div style="left:1729px;top:225px;width:132px;height:19px;border:1px solid #8a8a8a;background:#fff"></div>
<span class="t" style="left:1731px;top:227px;">0</span>
<div style="left:1874px;top:225px;width:88px;height:19px;border:1px solid #8a8a8a;background:#fff"></div>
<span class="t" style="left:1876px;top:227px;">ft</span>
<div style="left:1962px;top:224px;width:20px;height:20px;border:1px solid #e0e0e0;background:#f4f4f4;border-right-color:#696969;border-bottom-color:#696969"></div>
<span class="t" style="left:1966px;top:228px;letter-spacing:1px">...</span>
<svg style="left:1590px;top:231px;" width="19" height="15" viewBox="0 0 19 15"><path d="M1.800 7.300h14.500M10.500 1.500l6 5.800-6 5.800" fill="none" stroke="#5c5c5c" stroke-width="2" stroke-linecap="round" stroke-linejoin="round"/></svg>
<div style="left:1631px;top:255px;width:385px;height:31px;background:#fff;border-top:1px solid #a0a0a0;border-left:1px solid #a0a0a0;border-right:1px solid #f4f4f4;border-bottom:1px solid #f4f4f4"></div>
<div style="left:1632px;top:256px;width:383px;height:29px;border-top:1px solid #696969;border-left:1px solid #696969;border-right:1px solid #e3e3e3;border-bottom:1px solid #e3e3e3"></div>
<svg style="left:1639px;top:262px;" width="20" height="20" viewBox="0 0 20 20"><path d="M12.6 3.2l4.2 4.2L6.4 17.8l-6 2 2-6z" fill="#0b1c2b"/><path d="M13.6 2.2l1.5-1.5q1.1-1.1 2.2 0l2 2q1.1 1.1 0 2.200l-1.5 1.5z" fill="#0b1c2b"/><path d="M5.2 15l8.8-8.800" stroke="#fff" stroke-width="1.4"/></svg>
<svg style="left:1673px;top:264px;" width="16" height="16" viewBox="0 0 16 16"><path d="M0.8 0.8h13.2l1.2 1.2v13.2H0.8z" fill="#fff" stroke="#666" stroke-width="1.6"/><rect x="3.4" y="0.8" width="8" height="5" fill="#666"/><rect x="8" y="1.6" width="2" height="3.2" fill="#fff"/></svg>
<svg style="left:1704px;top:262px;" width="18" height="20" viewBox="0 0 18 20"><path d="M1.6 0.7h10l5.4 5.4v12.2q0 1-1 1H1.6q-1 0-1-1V1.7q0-1 1-1z" fill="#fff" stroke="#777" stroke-width="1.3"/><path d="M11.6 0.9v5.4h5.4" fill="none" stroke="#777" stroke-width="1"/><text x="3.600" y="17.800" font-family="Liberation Sans,sans-serif" font-weight="bold" font-size="13.5" fill="#555">X</text></svg>
<svg style="left:1737px;top:263px;" width="16" height="19" viewBox="0 0 16 18"><path d="M1 14.500V1.800q0-1 1-1h7" fill="none" stroke="#aaa" stroke-width="1.800" opacity=".65"/><path d="M4.400 3h6.400l4.600 4.600v8.800q0 1-1 1H4.400q-1 0-1-1V4q0-1 1-1z" fill="#fff" stroke="#aaa" stroke-width="1.300"/><path d="M10.600 3.200v3.600q0 1 1 1h3.600" fill="none" stroke="#aaa" stroke-width="1"/></svg>
<svg style="left:1769px;top:264px;" width="16" height="16" viewBox="0 0 16 16"><path d="M0.6 2.2h10.8v10H0.6z" fill="#fff" stroke="#aaa" stroke-width="1.2"/><path d="M3.6 2.2V0.6h4.8v1.6" fill="none" stroke="#aaa" stroke-width="1.2"/><path d="M2.4 2.8h7.2" stroke="#aaa" stroke-width="1.4"/><path d="M6.2 7.4l2-2h7.2v10H6.2z" fill="#fff" stroke="#aaa" stroke-width="1.2"/><path d="M8.4 5.6v2h-2" fill="none" stroke="#aaa" stroke-width="1"/></svg>
<svg style="left:1803px;top:264px;" width="14" height="16" viewBox="0 0 14 16"><path d="M5.8 0L0 5.6l5.8 5.6V7.6c3.4 0 5.4 1.6 5.2 7.6 2.6-3.6 3-11.4-5.2-11.6z" fill="#555"/></svg>
<svg style="left:1837px;top:264px;" width="17" height="17" viewBox="0 0 17 17"><text x="0.300" y="13" font-family="Liberation Serif,serif" font-style="italic" font-size="17" fill="#999" textLength="15.500" lengthAdjust="spacingAndGlyphs">fx</text></svg>
<svg style="left:1868px;top:264px;" width="19" height="13" viewBox="0 0 19 13"><text x="0" y="12" font-family="Liberation Serif,serif" font-size="15.5" fill="#888" textLength="18.5" lengthAdjust="spacingAndGlyphs">“T”</text></svg>
<svg style="left:1899px;top:270px;" width="20" height="5" viewBox="0 0 20 5"><rect x="0" y="0" width="20" height="4.6" rx="0.6" fill="#555"/><path d="M2.5 0v2.4M5.5 0v3M8.5 0v2.4M11.5 0v3M14.5 0v2.4M17.5 0v3" stroke="#fff" stroke-width="1"/></svg>
<svg style="left:1931px;top:264px;" width="20" height="17" viewBox="0 0 20 17"><path d="M3.700 13.500V1.700q0-1 1-1h7.500l4.400 4.400v8.400" fill="none" stroke="#2b2f36" stroke-width="1.200"/><path d="M12 0.900v3.600q0 0.800 0.800 0.800h3.600" fill="none" stroke="#2b2f36" stroke-width="1"/><rect x="0" y="13.200" width="20" height="3.800" rx="0.800" fill="#0b1c2b"/><path d="M2.500 13.800v1.400M5.500 13.800v1.800M8.500 13.800v1.400M11.500 13.800v1.800M14.500 13.800v1.400M17.500 13.800v1.800" stroke="#fff" stroke-width="0.900"/></svg>
<div style="left:1631px;top:288px;width:385px;height:139px;background:#fff;border-top:1px solid #a0a0a0;border-left:1px solid #a0a0a0;border-right:1px solid #f4f4f4;border-bottom:1px solid #f4f4f4"></div>
<div style="left:1632px;top:289px;width:383px;height:137px;border-top:1px solid #696969;border-left:1px solid #696969;border-right:1px solid #e3e3e3;border-bottom:1px solid #e3e3e3"></div>
<span style="left:1634.5px;top:292px;font-family:'Liberation Mono',monospace;font-size:13px;color:#0000ff;line-height:16px">[Len-s]</span>
<div style="left:2px;top:461px;width:122px;height:1px;background:#000"></div>
<div style="left:180px;top:461px;width:1868px;height:1px;background:#000"></div>
<div style="left:180px;top:461px;width:1px;height:23px;background:#000"></div>
<div style="left:124px;top:483px;width:57px;height:1px;background:#000"></div>
<span class="t" style="left:15.1px;top:466px;letter-spacing:0.18px;">Descriptions / Notes</span>
<span class="t" style="left:131.8px;top:466px;letter-spacing:0.27px;">Settings</span>
<span class="t" style="left:189.5px;top:466px;letter-spacing:0.13px;">Cost price</span>
<div style="left:246px;top:465px;width:1px;height:18px;background:#000"></div>
<span class="t" style="left:254.3px;top:466px;letter-spacing:0.29px;">Error / Improvements</span>
<div style="left:371px;top:465px;width:1px;height:18px;background:#000"></div>
<span class="t" style="left:379.5px;top:466px;letter-spacing:-0.11px;">Summary</span>
<div style="left:435px;top:465px;width:1px;height:18px;background:#000"></div>
<span class="t" style="left:443.5px;top:466px;letter-spacing:0.40px;">Usage</span>
<div style="left:482px;top:465px;width:1px;height:18px;background:#000"></div>
<svg style="left:0;top:0;pointer-events:none" width="2048" height="498" viewBox="0 0 2048 498"><defs><filter id="sh" x="-40%" y="-20%" width="220%" height="150%"><feGaussianBlur in="SourceAlpha" stdDeviation="1.3"/><feOffset dx="3" dy="1.5"/><feComponentTransfer><feFuncA type="linear" slope="0.5"/></feComponentTransfer><feMerge><feMergeNode/><feMergeNode in="SourceGraphic"/></feMerge></filter></defs><ellipse cx="153.3" cy="474.4" rx="35.1" ry="15.4" fill="none" stroke="#8b0000" stroke-width="3" filter="url(#sh)"/><circle cx="828.5" cy="92.5" r="14.8" fill="#8b0000"/><g filter="url(#sh)"><path d="M828.1 105L828.1 132" stroke="#8b0000" stroke-width="2"/><path d="M824.3000000000001 129.5h7.6L828.1 140z" fill="#8b0000"/></g><text x="828.5" y="97.9" text-anchor="middle" font-family="Liberation Sans,sans-serif" font-size="16.5" fill="#fff">1</text><circle cx="1028.4" cy="93.5" r="14.8" fill="#8b0000"/><g filter="url(#sh)"><path d="M1028.9 105L1028.9 132.7" stroke="#8b0000" stroke-width="2"/><path d="M1025.1000000000001 130.2h7.6L1028.9 140.7z" fill="#8b0000"/></g><text x="1028.4" y="98.9" text-anchor="middle" font-family="Liberation Sans,sans-serif" font-size="16.5" fill="#fff">2</text><circle cx="1190.4" cy="93.5" r="14.8" fill="#8b0000"/><g filter="url(#sh)"><path d="M1191.2 103.7L1192 132.7" stroke="#8b0000" stroke-width="2"/><path d="M1188.2 130.2h7.6L1192 140.7z" fill="#8b0000"/></g><text x="1190.4" y="98.9" text-anchor="middle" font-family="Liberation Sans,sans-serif" font-size="16.5" fill="#fff">3</text><circle cx="1259.4" cy="93.5" r="14.8" fill="#8b0000"/><g filter="url(#sh)"><path d="M1262.2 103L1263.2 132.7" stroke="#8b0000" stroke-width="2"/><path d="M1259.4 130.2h7.6L1263.2 140.7z" fill="#8b0000"/></g><text x="1259.4" y="98.9" text-anchor="middle" font-family="Liberation Sans,sans-serif" font-size="16.5" fill="#fff">4</text><circle cx="1343.5" cy="94.7" r="14.8" fill="#8b0000"/><g filter="url(#sh)"><path d="M1344.9 108L1346.5 132.7" stroke="#8b0000" stroke-width="2"/><path d="M1342.7 130.2h7.6L1346.5 140.7z" fill="#8b0000"/></g><text x="1343.5" y="100.10000000000001" text-anchor="middle" font-family="Liberation Sans,sans-serif" font-size="16.5" fill="#fff">5</text><circle cx="1395.5" cy="93.5" r="14.8" fill="#8b0000"/><g filter="url(#sh)"><path d="M1394.7 101.3L1396.3 134.3" stroke="#8b0000" stroke-width="2"/><path d="M1392.5 131.8h7.6L1396.3 142.3z" fill="#8b0000"/></g><text x="1395.5" y="98.9" text-anchor="middle" font-family="Liberation Sans,sans-serif" font-size="16.5" fill="#fff">6</text><circle cx="1466.5" cy="94.7" r="14.8" fill="#8b0000"/><g filter="url(#sh)"><path d="M1467.5 108L1467.5 129.5" stroke="#8b0000" stroke-width="2"/><path d="M1463.7 127.0h7.6L1467.5 137.5z" fill="#8b0000"/></g><text x="1466.5" y="100.10000000000001" text-anchor="middle" font-family="Liberation Sans,sans-serif" font-size="16.5" fill="#fff">7</text></svg>
</body></html>
